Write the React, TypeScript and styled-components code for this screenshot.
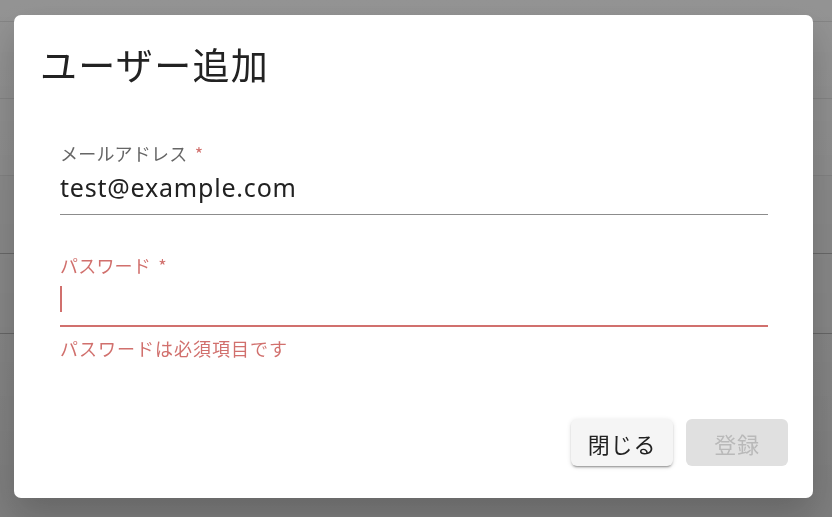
import React from "react";
import styled, { createGlobalStyle } from "styled-components";

const ERROR = "#d1706d";

const GlobalStyle = createGlobalStyle`
    html, body {
        margin: 0;
        padding: 0;
        background: #f2f2f2;
        font-family: "Noto Sans", "Noto Sans CJK JP", sans-serif;
    }
`;

// 背景のテーブル行 (ダイアログの下に見えている部分)
const rows: { h: number; dark?: boolean }[] = [
    { h: 22 },
    { h: 77 },
    { h: 77 },
    { h: 78, dark: true },
    { h: 80, dark: true },
];

const App: React.FC = () => {
    return (
        <>
            <GlobalStyle />
            <Page>
                {rows.map((r, i) => (
                    <BgRow key={i} $h={r.h} $dark={r.dark} />
                ))}
            </Page>
            <Backdrop>
                <Dialog role="dialog" aria-labelledby="dlg-title">
                    <Title id="dlg-title">ユーザー追加</Title>
                    <Content>
                        <Field>
                            <Label>
                                メールアドレス<Asterisk> *</Asterisk>
                            </Label>
                            <InputRow $line={1} $color="#8c8c8c">
                                <Value>test@example.com</Value>
                            </InputRow>
                        </Field>
                        <Field $gap={38}>
                            <Label $error>
                                パスワード<Asterisk> *</Asterisk>
                            </Label>
                            <InputRow $line={2} $color={ERROR}>
                                <Caret />
                            </InputRow>
                            <Helper>パスワードは必須項目です</Helper>
                        </Field>
                    </Content>
                    <Actions>
                        <Button>閉じる</Button>
                        <Button disabled>登録</Button>
                    </Actions>
                </Dialog>
            </Backdrop>
        </>
    );
};

const Page = styled.div`
    height: 100vh;
    background: linear-gradient(to bottom, #f6f6f6, #e6e6e6);
`;

const BgRow = styled.div<{ $h: number; $dark?: boolean }>`
    height: ${({ $h }) => $h - 1}px;
    border-bottom: 1px solid ${({ $dark }) => ($dark ? "#b4b4b4" : "#dedede")};
    background: ${({ $dark }) => ($dark ? "#ececec" : "transparent")};
`;

const Backdrop = styled.div`
    position: fixed;
    inset: 0;
    display: flex;
    padding: 15px 19px 19px 14px;
    background: linear-gradient(to bottom, rgba(0, 0, 0, 0.4), rgba(0, 0, 0, 0.46));
`;

const Dialog = styled.div`
    flex: 1;
    display: flex;
    flex-direction: column;
    background: #fff;
    border-radius: 7px;
    box-shadow: 0 16px 36px rgba(0, 0, 0, 0.2);
`;

const Title = styled.h2`
    margin: 0;
    padding: 27px 26px 0;
    font-family: "Noto Sans CJK JP", sans-serif;
    font-size: 37px;
    font-weight: 400;
    line-height: 44px;
    letter-spacing: 1.3px;
    color: #222;
`;

const Content = styled.div`
    display: flex;
    flex-direction: column;
    padding: 55px 45px 0 46px;
`;

const Field = styled.div<{ $gap?: number }>`
    display: flex;
    flex-direction: column;
    margin-top: ${({ $gap }) => $gap ?? 0}px;
`;

const Label = styled.label<{ $error?: boolean }>`
    font-family: "Noto Sans CJK JP", sans-serif;
    font-size: 18px;
    line-height: 24px;
    letter-spacing: 0.2px;
    color: ${({ $error }) => ($error ? ERROR : "#666")};
`;

const Asterisk = styled.span`
    margin-left: 3px;
    color: ${ERROR};
`;

const InputRow = styled.div<{ $line: number; $color: string }>`
    display: flex;
    align-items: center;
    height: 30px;
    padding: 7px 0 ${({ $line }) => 13 - $line}px;
    border-bottom: ${({ $line }) => $line}px solid ${({ $color }) => $color};
`;

const Value = styled.span`
    font-family: "Noto Sans", sans-serif;
    font-size: 25px;
    line-height: 30px;
    letter-spacing: 0.8px;
    color: #212121;
`;

const Caret = styled.span`
    display: inline-block;
    width: 2px;
    height: 26px;
    background: ${ERROR};
`;

const Helper = styled.p`
    margin: 9px 0 0;
    font-family: "Noto Sans CJK JP", sans-serif;
    font-size: 18px;
    line-height: 24px;
    letter-spacing: 1px;
    color: ${ERROR};
`;

const Actions = styled.div`
    margin-top: auto;
    display: flex;
    justify-content: flex-end;
    gap: 13px;
    padding: 0 25px 32px;
`;

const Button = styled.button`
    width: 102px;
    height: 47px;
    display: flex;
    align-items: center;
    justify-content: center;
    border: none;
    border-radius: 6px;
    font-family: "Noto Sans CJK JP", sans-serif;
    font-size: 22px;
    letter-spacing: 0.8px;
    color: #222;
    background: #f5f5f5;
    box-shadow: 0 3px 1px -2px rgba(0, 0, 0, 0.2), 0 2px 2px 0 rgba(0, 0, 0, 0.14),
        0 1px 5px 0 rgba(0, 0, 0, 0.12);
    cursor: pointer;
    &:disabled {
        color: #b9b9b9;
        background: #e0e0e0;
        box-shadow: none;
        cursor: default;
    }
`;

export default App;
